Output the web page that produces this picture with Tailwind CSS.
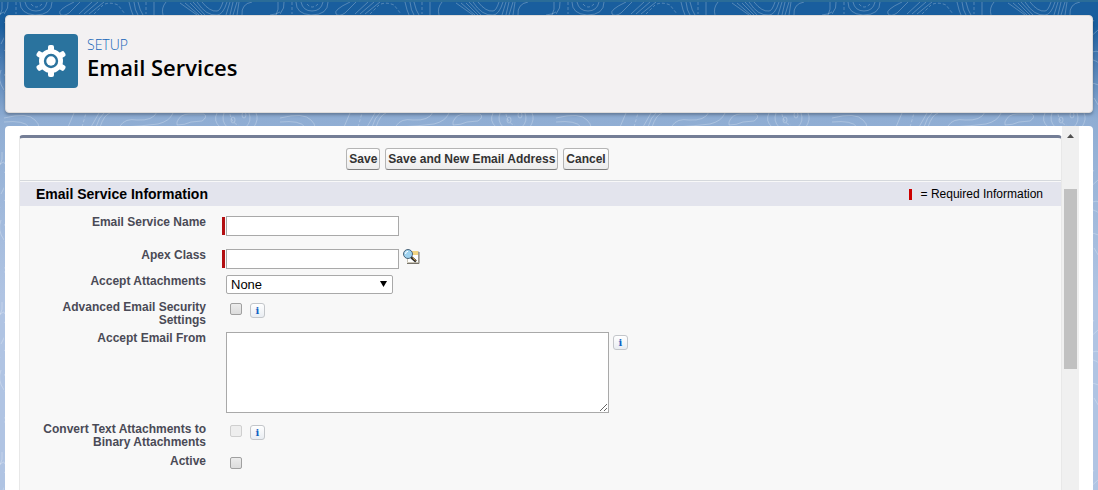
<!DOCTYPE html>
<html lang="en">
<head>
    <meta charset="UTF-8">
    <meta name="viewport" content="width=device-width, initial-scale=1.0">
    <title>Email Services - Setup</title>
    <script src="https://cdn.jsdelivr.net/npm/@tailwindcss/browser@4"></script>
</head>
<body class="font-['Liberation_Sans',sans-serif] text-black">
    <div class="relative isolate flex min-h-screen flex-col gap-[13px] border-t-2 border-[#2a6c98] bg-linear-to-b from-[#195e9e] from-5% via-[#8fadd3] via-24% to-[#b0c4e3] to-60% px-[5px] pt-[13px]">
        <!-- Contour line background -->
        <svg class="absolute inset-0 -z-10 h-full w-full" aria-hidden="true">
            <defs>
                <pattern id="contours" x="280" y="-2" width="276" height="150" patternUnits="userSpaceOnUse">
                    <g fill="none" stroke="#ffffff" stroke-opacity=".25" stroke-width="1">
                        <path d="M4 2q1 6-4 12M16 2q0 12 15 13q17 0 17-13M21 2q2 9 11 9t11-9" />
                        <path d="M27 4q5 6 11 0M12 2v12M101 4q6-2 13 1l7 9M90 14l9-9M142 2v12" stroke-dasharray="3 2" />
                        <path d="M70 2q-17 8-14 12q3 3 9-1l11-11M75 14l13-12M80 14l14-12M85 14l15-12M125 2q2 9 4 13M130 2q1 9 4 13M134 2q2 9 5 13M150 2v13M162 2q-5 6-3 13" />
                        <path d="M176 3l17 12M181 3l14 12M186 3l12 12M189 2l12 13M193 2q9 14 20 13q6 0 10-13M198 2q8 10 15 9q3 0 6-9M222 15l4-13M226 15l3-13M229 15l4-13M233 15l2-13M238 15q-1-11 10-13M266 15q14-1 17-13M274 2q1 8-2 13" />
                        <path d="M0 118q24-6 31 2q4 4 4 7M0 122q20-2 25 5M64 127l6-14M87 127l8-14M92 127q3-10 8-14M96 127q4-12 10-14M116 126q5-8 17-6q16 1 20-8M120 127q18-1 34-3q12-3 15-11M173 122q3-8 12-8h15q4 3-2 7l-11 1q-6 3-14 3zM213 113q-4 8 3 14M220 113q-3 8 3 14M245 113q3 8-3 14M252 113q3 6-2 14" />
                        <path d="M78 127l4-14M226 114q2 10 9 11" stroke-dasharray="3 2" />
                        <ellipse cx="229" cy="120" rx="2" ry="3" />
                        <ellipse cx="240" cy="115" rx="2" ry="3" />
                        <path d="M257 16l-12 14M262 20l-9 12M266 30l-12 11M260 52q9-3 12 6M261 60q10 2 8 14M256 84q14-3 14 10M262 98l6 10M0 22q9 4 3 15M0 50q7 4 2 14M0 74q7 9 1 18M273 44l4-8M273 70q-4 10 3 20" />
                    </g>
                </pattern>
            </defs>
            <rect width="100%" height="100%" fill="url(#contours)" />
        </svg>

        <!-- Page header -->
        <header class="flex h-[98px] items-start gap-[9px] rounded border border-[#dddbda] bg-[#f3f1f2] px-[18px] py-[18px] shadow-[0_2px_3px_rgba(0,0,0,0.25)]">
            <span class="flex size-[54px] shrink-0 items-center justify-center rounded bg-[#2a739e]">
                <svg class="size-8" viewBox="-16 -16 32 32" aria-hidden="true">
                    <g fill="#ffffff">
                        <circle r="12" />
                        <rect x="-3" y="-16" width="6" height="32" rx="2" />
                        <rect x="-3" y="-16" width="6" height="32" rx="2" transform="rotate(60)" />
                        <rect x="-3" y="-16" width="6" height="32" rx="2" transform="rotate(120)" />
                    </g>
                    <circle r="7.2" fill="#2a739e" />
                    <circle r="4.7" fill="#ffffff" />
                </svg>
            </span>
            <div class="pt-[2px] font-['Open_Sans',sans-serif]">
                <p class="text-sm leading-[18px] font-light text-[#1565b8]">SETUP</p>
                <h1 class="text-[22px] leading-[26px] font-semibold">Email Services</h1>
            </div>
        </header>

        <main class="flex grow rounded-t bg-white pr-[14px] pl-[14px]">
            <form class="mt-[9px] grow rounded-t border-x border-t-3 border-x-[#e8e8e8] border-t-[#747e96] bg-[#f8f8f8]">
                <div class="flex h-[43px] items-center justify-center gap-[5px] border-b border-[#d5d8dc] pr-[126px] text-xs font-bold text-[#333333]">
                    <button type="button" class="h-[22px] rounded-[3px] border border-[#b5b5b5] border-b-[#7f7f7f] bg-linear-to-b from-white to-[#ececec] px-[2px]">Save</button>
                    <button type="button" class="h-[22px] rounded-[3px] border border-[#b5b5b5] border-b-[#7f7f7f] bg-linear-to-b from-white to-[#ececec] px-[2px]">Save and New Email Address</button>
                    <button type="button" class="h-[22px] rounded-[3px] border border-[#b5b5b5] border-b-[#7f7f7f] bg-linear-to-b from-white to-[#ececec] px-[2px]">Cancel</button>
                </div>

                <div class="mt-px flex h-6 items-center justify-between bg-[#e3e4ed] pr-[18px] pl-4">
                    <h2 class="text-sm font-bold">Email Service Information</h2>
                    <p class="flex items-center gap-[9px] text-xs"><span class="h-[11px] w-[3px] bg-[#c00]"></span>= Required Information</p>
                </div>

                <div class="pt-[10px] text-xs leading-[13px]">
                    <div class="mb-[13px] flex gap-4">
                        <label for="service-name" class="w-[186px] text-right font-bold text-[#4a4a56]">Email Service Name</label>
                        <div class="flex gap-px">
                            <span class="mt-px h-[18px] w-[3px] bg-[#b30f12]"></span>
                            <input id="service-name" type="text" required class="h-5 w-[173px] border border-[#a9a9a9] bg-white px-1">
                        </div>
                    </div>
                    <div class="mb-[6px] flex gap-4">
                        <label for="apex-class" class="w-[186px] text-right font-bold text-[#4a4a56]">Apex Class</label>
                        <div class="flex gap-px">
                            <span class="mt-px h-[18px] w-[3px] bg-[#b30f12]"></span>
                            <input id="apex-class" type="text" required class="h-5 w-[173px] border border-[#a9a9a9] bg-white px-1">
                            <a href="#" class="ml-[3px] h-4" aria-label="Apex Class Lookup">
                                <svg class="size-[17px]" viewBox="0 0 17 17">
                                    <path d="M4.500 2.500h11v11h-11z" fill="#ffffff" stroke="#c9c4b4" />
                                    <path d="M8 2h7v4H8z" fill="#f3d583" />
                                    <path d="M4 14.500h12V3" fill="none" stroke="#77736a" />
                                    <path d="M8 8l5 4.500" stroke="#2b2b2b" stroke-width="2.500" />
                                    <path d="M9.500 8.700l3 2.800" stroke="#e0aa45" />
                                    <circle cx="5" cy="5" r="4.500" fill="#9fd2ef" stroke="#4a6378" />
                                    <path d="M2.500 5q0-2.500 2.500-2.700" fill="none" stroke="#ffffff" />
                                </svg>
                            </a>
                        </div>
                    </div>
                    <div class="mb-[7px] flex gap-5">
                        <label for="accept-attachments" class="w-[186px] text-right font-bold text-[#4a4a56]">Accept Attachments</label>
                        <div class="relative">
                            <select id="accept-attachments" class="block h-[19px] w-[167px] appearance-none rounded-xs border border-[#a9a9a9] bg-white pl-1 text-[13px] leading-4">
                                <option>None</option>
                            </select>
                            <svg class="pointer-events-none absolute top-[6px] right-[6px] h-[6px] w-[7px]" viewBox="0 0 7 6" aria-hidden="true"><path d="M0 0h7L3.500 6z" /></svg>
                        </div>
                    </div>
                    <div class="mb-[5px] flex gap-6">
                        <label for="security" class="w-[186px] text-right font-bold text-[#4a4a56]">Advanced Email Security<br>Settings</label>
                        <div class="flex gap-2 pt-[2px]">
                            <input id="security" type="checkbox" class="size-3 appearance-none rounded-[2px] border border-[#a0a0a0] bg-linear-to-b from-[#ececec] to-[#dcdcdc]">
                            <button type="button" class="h-[15px] w-[15px] rounded-[3px] border border-[#c3c6ca] bg-linear-to-b from-white to-[#e9edf2] font-['DejaVu_Serif',serif] text-[10px] leading-[13px] font-bold text-[#0f62c4]">i</button>
                        </div>
                    </div>
                    <div class="mb-[10px] flex gap-5">
                        <label for="accept-from" class="w-[186px] text-right font-bold text-[#4a4a56]">Accept Email From</label>
                        <div class="flex gap-1">
                            <textarea id="accept-from" class="block h-[81px] w-[383px] border border-[#a9a9a9] bg-white"></textarea>
                            <button type="button" class="mt-[3px] h-[15px] w-[15px] rounded-[3px] border border-[#c3c6ca] bg-linear-to-b from-white to-[#e9edf2] font-['DejaVu_Serif',serif] text-[10px] leading-[13px] font-bold text-[#0f62c4]">i</button>
                        </div>
                    </div>
                    <div class="mb-[6px] flex gap-6">
                        <label for="convert" class="w-[186px] text-right font-bold text-[#4a4a56]">Convert Text Attachments to<br>Binary Attachments</label>
                        <div class="flex gap-2 pt-[2px]">
                            <input id="convert" type="checkbox" disabled class="size-3 appearance-none rounded-[2px] border border-[#cfcfcf] bg-[#eeeeee]">
                            <button type="button" class="h-[15px] w-[15px] rounded-[3px] border border-[#c3c6ca] bg-linear-to-b from-white to-[#e9edf2] font-['DejaVu_Serif',serif] text-[10px] leading-[13px] font-bold text-[#0f62c4]">i</button>
                        </div>
                    </div>
                    <div class="flex gap-6">
                        <label for="active" class="w-[186px] text-right font-bold text-[#4a4a56]">Active</label>
                        <div class="pt-[2px]">
                            <input id="active" type="checkbox" class="block size-3 appearance-none rounded-[2px] border border-[#a0a0a0] bg-linear-to-b from-[#ececec] to-[#dcdcdc]">
                        </div>
                    </div>
                </div>
            </form>

            <!-- Scroll bar -->
            <div class="flex w-[17px] shrink-0 flex-col items-center bg-[#f0f0f0] pt-2">
                <svg class="h-1 w-[7px]" viewBox="0 0 7 4" aria-hidden="true"><path d="M0 4h7L3.500 0z" fill="#505050" /></svg>
                <div class="mt-[51px] h-[180px] w-[13px] bg-[#c1c1c1]"></div>
            </div>
        </main>
    </div>
</body>
</html>
